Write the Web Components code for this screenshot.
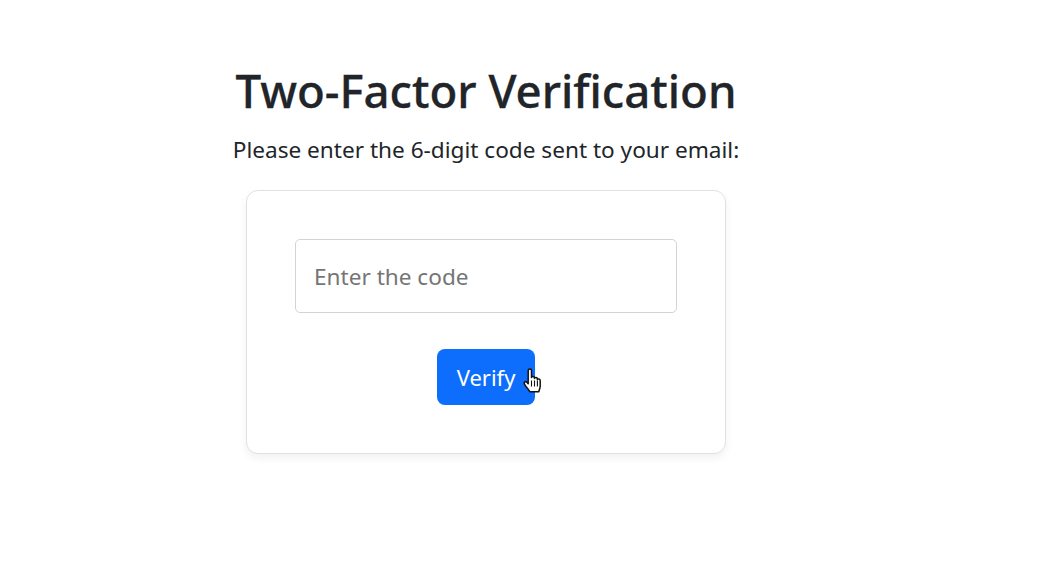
<!DOCTYPE html>
<html lang="en"><head><meta charset="utf-8"><title>Two-Factor Verification</title>
<style>html,body{margin:0;background:#fff}body{font-family:"Noto Sans","Open Sans",sans-serif;color:#212529}</style>
</head><body>
<tfa-page>
  <span slot="title">Two-Factor Verification</span>
  <span slot="lead">Please enter the 6-digit code sent to your email:</span>
  <tfa-card>
    <tfa-input placeholder="Enter the code"></tfa-input>
    <tfa-button>Verify<hand-cursor slot="cursor"></hand-cursor></tfa-button>
  </tfa-card>
</tfa-page>
<script>
function def(name, html, setup){
  customElements.define(name, class extends HTMLElement{
    constructor(){super();this.attachShadow({mode:'open'}).innerHTML=html;}
    connectedCallback(){if(setup)setup(this);}
  });
}
def('tfa-page',`<style>
:host{display:flex;flex-direction:column;align-items:center;width:972px;height:577px;padding-top:59px;box-sizing:border-box;text-align:center}
h1{margin:0;font-size:45.6px;font-weight:500;line-height:62px;white-space:nowrap;color:#212529;-webkit-text-stroke:.3px #212529}
p{margin:12px 0 23px;font-size:22.6px;line-height:34px;white-space:nowrap}
</style><h1><slot name="title"></slot></h1><p><slot name="lead"></slot></p><slot></slot>`);
def('tfa-card',`<style>
:host{display:flex;flex-direction:column;align-items:center;gap:36px;width:480px;height:264px;box-sizing:border-box;padding:48px;background:#fff;border:1px solid #dee2e6;border-radius:12px;box-shadow:0 4px 8px rgba(0,0,0,.06)}
</style><slot></slot>`);
def('tfa-input',`<style>
:host{display:block;width:100%}
input{display:block;width:100%;height:74px;box-sizing:border-box;padding:0 18px;border:1px solid #ced4da;border-radius:5px;font:22.6px "Noto Sans","Open Sans",sans-serif;color:#212529;background:#fff;outline:none}
input::placeholder{color:#757575;opacity:1}
</style><input type="text">`,el=>{el.shadowRoot.querySelector('input').placeholder=el.getAttribute('placeholder')||'';});
def('tfa-button',`<style>
:host{display:block;position:relative}
button{display:block;width:98px;height:56px;padding:0;border:0;border-radius:8px;background:#0d6efd;color:#fff;font:22px "Noto Sans","Open Sans",sans-serif}
::slotted(hand-cursor){position:absolute;left:86px;top:19px}
</style><button><slot></slot></button><slot name="cursor"></slot>`);
def('hand-cursor',`<style>:host{display:block;width:19px;height:26px}svg{display:block}</style>
<svg width="19" height="26" viewBox="0 0 19 26"><path d="M5.200 2.500c0-2 3.300-2 3.300 0V9.500c.2-1.300 3-1.300 3 .3v.7c.2-1.300 2.800-1.200 2.900.4v.8c.2-1.200 2.800-1 2.800.7v5.300c0 2.600-.8 3.800-1.500 6H6.800C5.800 21.500 3.200 19.500 1.500 16.200c-1-2 1.100-3.300 2.300-2l1.400 1.600z" fill="#fff" stroke="#111" stroke-width="1.500" stroke-linejoin="round"/><path d="M8.500 12.500v6M11.500 12.500v6M14.400 12.500v6" stroke="#111" stroke-width="1.100"/></svg>`);
</script>
</body></html>
